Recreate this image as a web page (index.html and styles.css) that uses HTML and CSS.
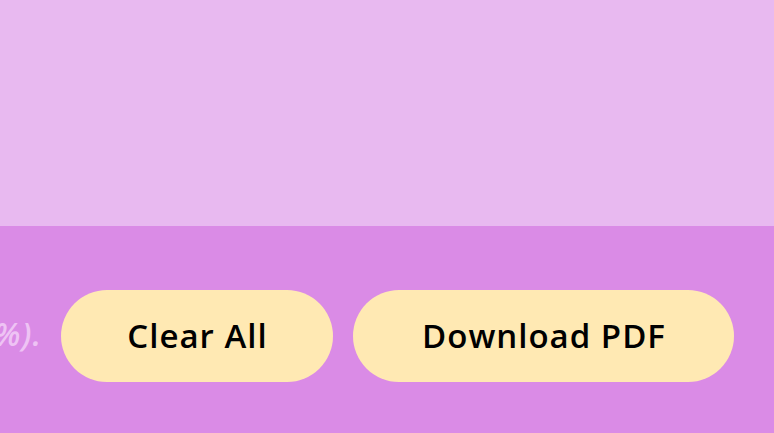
FILE: index.html
```html
<!DOCTYPE html>
<html lang="en">
<head>
<meta charset="utf-8">
<title>Editor</title>
<link rel="stylesheet" href="styles.css">
</head>
<body>
<main class="page">
  <section class="canvas"></section>
  <footer class="toolbar">
    <p class="hint">Tip: lower the opacity for a softer watermark (e.g. 50%).</p>
    <button class="btn btn-clear" type="button">Clear All</button>
    <button class="btn btn-download" type="button">Download PDF</button>
  </footer>
</main>
</body>
</html>
```
FILE: styles.css
```css
html, body {
  margin: 0;
  padding: 0;
}
body {
  width: 774px;
  height: 433px;
  overflow: hidden;
  background: #da8be6;
  font-family: "Open Sans", "Noto Sans", sans-serif;
}
.page {
  display: flex;
  flex-direction: column;
  height: 433px;
}
.canvas {
  height: 226px;
  background: #e8b9f0;
  flex-shrink: 0;
}
.toolbar {
  flex: 1;
  background: #da8be6;
  display: flex;
  align-items: flex-start;
  justify-content: flex-end;
  gap: 20px;
  padding: 64px 40px 0 0;
  overflow: hidden;
}
.hint {
  margin: 0;
  flex-shrink: 0;
  white-space: nowrap;
  line-height: 44px;
  padding-top: 22px;
  margin-right: -1px;
  font-style: italic;
  font-weight: 600;
  font-size: 32px;
  letter-spacing: 1px;
  color: #eec3f4;
}
.btn {
  flex-shrink: 0;
  height: 92px;
  border: none;
  border-radius: 46px;
  background: #ffe9b3;
  color: #000;
  font-family: "Open Sans", "Noto Sans", sans-serif;
  font-weight: 600;
  font-size: 33px;
  letter-spacing: 1px;
  padding: 0 0 2px 1px;
  cursor: pointer;
}
.btn-clear {
  width: 272px;
}
.btn-download {
  width: 381px;
}
```
